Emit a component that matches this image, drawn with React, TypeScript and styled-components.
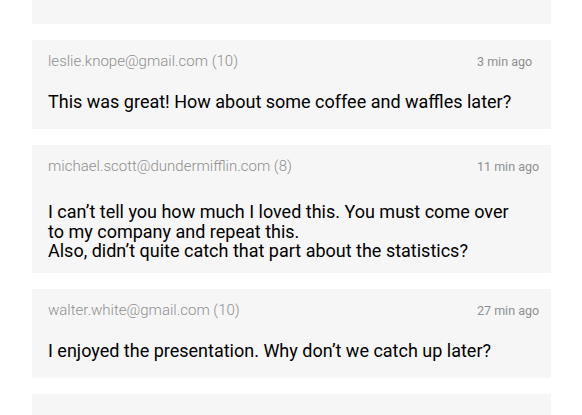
import React from "react";
import styled, { createGlobalStyle } from "styled-components";

const GlobalStyle = createGlobalStyle`
  html, body {
    margin: 0;
    padding: 0;
    background: #ffffff;
    overflow: hidden;
  }
  body {
    font-family: Roboto, "Liberation Sans", Arial, sans-serif;
  }
`;

const Page = styled.div`
  height: 415px;
  overflow: hidden;
`;

const CommentList = styled.ul`
  list-style: none;
  margin: -65px 0 0 0;
  padding: 0 31px 0 32px;
  display: flex;
  flex-direction: column;
  gap: 16px;
`;

const Card = styled.li<{ $multiline?: boolean }>`
  background: #f6f6f6;
  padding: 11px 18px ${(p) => (p.$multiline ? "12px" : "17px")} 16px;
  min-height: 61px;
`;

const Header = styled.div<{ $multiline?: boolean }>`
  display: flex;
  justify-content: space-between;
  align-items: center;
  height: 20px;
  margin-bottom: ${(p) => (p.$multiline ? "26px" : "21px")};
`;

const Author = styled.span`
  font-size: 15px;
  font-weight: 300;
  color: #8f8f8f;
  line-height: 20px;
`;

const Time = styled.span`
  width: 56px;
  white-space: nowrap;
  font-size: 12.5px;
  color: #8f8f8f;
  line-height: 20px;
  margin-top: 2px;
`;

const Message = styled.p`
  margin: 0;
  font-size: 18px;
  line-height: 19.5px;
  color: #000000;
`;

interface Comment {
  author: string;
  score: number;
  time: string;
  lines: string[];
}

const comments: Comment[] = [
  {
    author: "leslie.knope@gmail.com",
    score: 10,
    time: "3 min ago",
    lines: ["This was great! How about some coffee and waffles later?"],
  },
  {
    author: "michael.scott@dundermifflin.com",
    score: 8,
    time: "11 min ago",
    lines: [
      "I can\u2019t tell you how much I loved this. You must come over",
      "to my company and repeat this.",
      "Also, didn\u2019t quite catch that part about the statistics?",
    ],
  },
  {
    author: "walter.white@gmail.com",
    score: 10,
    time: "27 min ago",
    lines: ["I enjoyed the presentation. Why don\u2019t we catch up later?"],
  },
];

function CommentCard({ comment }: { comment: Comment }) {
  const multiline = comment.lines.length > 1;
  return (
    <Card $multiline={multiline}>
      <Header $multiline={multiline}>
        <Author>
          {comment.author} ({comment.score})
        </Author>
        <Time>{comment.time}</Time>
      </Header>
      <Message>
        {comment.lines.map((line, i) => (
          <React.Fragment key={i}>
            {i > 0 && <br />}
            {line}
          </React.Fragment>
        ))}
      </Message>
    </Card>
  );
}

export default function App() {
  return (
    <Page>
      <GlobalStyle />
      <CommentList>
        {/* previous comment, scrolled mostly out of view */}
        <Card aria-hidden />
        {comments.map((c) => (
          <CommentCard key={c.author} comment={c} />
        ))}
        {/* next comment, just entering the view */}
        <Card aria-hidden />
      </CommentList>
    </Page>
  );
}
